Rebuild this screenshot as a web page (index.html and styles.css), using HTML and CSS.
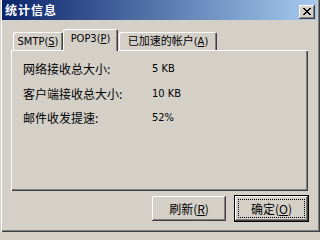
FILE: index.html
```html
<!DOCTYPE html>
<html lang="zh-CN">
<head>
<meta charset="utf-8">
<title>统计信息</title>
<link rel="stylesheet" href="styles.css">
</head>
<body>
<div class="window">
  <div class="titlebar">
    <span class="title">统计信息</span>
    <span class="close">
      <svg width="8" height="7" viewBox="0 0 8 7" shape-rendering="crispEdges">
        <path d="M0 0h2v1h-2zM6 0h2v1h-2zM1 1h2v1h-2zM5 1h2v1h-2zM2 2h4v1h-4zM3 3h2v1h-2zM2 4h4v1h-4zM1 5h2v1h-2zM5 5h2v1h-2zM0 6h2v1h-2zM6 6h2v1h-2z" fill="#000"/>
      </svg>
    </span>
  </div>
  <div class="content">
    <div class="tabs">
      <div class="tab tab-smtp">SMTP(<u>S</u>)</div>
      <div class="tab tab-pop3 active">POP3(<u>P</u>)</div>
      <div class="tab tab-acc">已加速的帐户(<u>A</u>)</div>
    </div>
    <div class="panel">
      <div class="stats">
        <span class="label">网络接收总大小:</span><span class="value">5 KB</span>
        <span class="label">客户端接收总大小:</span><span class="value">10 KB</span>
        <span class="label">邮件收发提速:</span><span class="value">52%</span>
      </div>
    </div>
    <div class="buttons">
      <div class="btn">刷新(<u>R</u>)</div>
      <div class="btn btn-default"><span class="focus">确定(<u>O</u>)</span></div>
    </div>
  </div>
</div>
</body>
</html>
```
FILE: styles.css
```css
html, body {
  margin: 0;
  padding: 0;
  background: #d4d0c8;
}
body {
  font-family: "DejaVu Sans Condensed", "DejaVu Sans", "Noto Sans CJK SC", sans-serif;
  font-stretch: condensed;
  font-size: 11px;
  line-height: 14px;
  color: #000;
}
.window {
  width: 320px;
  height: 232px;
  box-sizing: border-box;
  padding: 0 3px 2px 2px;
  background: #d4d0c8;
  box-shadow: inset 1px 0 #d4d0c8, inset 2px 0 #fff, inset -1px -1px #404040, inset -2px -2px #808080;
  display: flex;
  flex-direction: column;
}
.titlebar {
  height: 20px;
  background: linear-gradient(to right, #0a246a, #a6caf0);
  display: flex;
  align-items: flex-start;
  justify-content: space-between;
}
.title {
  font-family: "Noto Sans CJK SC", sans-serif;
  font-weight: bold;
  font-size: 12px;
  letter-spacing: 1px;
  color: #fff;
  padding-left: 3px;
  line-height: 20px;
}
.close {
  width: 16px;
  height: 14px;
  margin-top: 5px;
  margin-right: 2px;
  box-sizing: border-box;
  background: #d4d0c8;
  box-shadow: inset -1px -1px #404040, inset 1px 1px #fff, inset -2px -2px #808080;
  display: flex;
  align-items: center;
  justify-content: center;
  padding-bottom: 1px;
}
.close svg { display: block; }
.content {
  padding-left: 9px;
  display: flex;
  flex-direction: column;
}
.tabs {
  margin-top: 9px;
  margin-left: 2px;
  height: 21px;
  display: flex;
  align-items: flex-end;
}
.tab {
  height: 18px;
  box-sizing: border-box;
  display: flex;
  align-items: center;
  justify-content: center;
  padding-top: 1px;
  border-radius: 2px 2px 0 0;
  box-shadow: inset 1px 1px #fff, inset -1px 0 #404040, inset -2px 0 #808080;
  font-family: "DejaVu Sans Condensed", "DejaVu Sans", "Noto Sans CJK SC", sans-serif;
}
.tab-smtp { width: 50px; }
.tab-pop3 { width: 55px; }
.tab-acc { width: 98px; margin-left: 1px; }
.tab.active {
  height: 22px;
  margin-bottom: -1px;
  padding-top: 0;
  padding-bottom: 3px;
  position: relative;
  z-index: 1;
  background: #d4d0c8;
}
.panel {
  width: 297px;
  height: 141px;
  box-sizing: border-box;
  padding: 12px 0 0 12px;
  box-shadow: inset 1px 1px #fff, inset -1px -1px #404040, inset -2px -2px #808080;
}
.stats {
  display: grid;
  grid-template-columns: 129px auto;
  row-gap: 10.5px;
}
.label {
  font-family: "Noto Sans CJK SC", sans-serif;
  font-size: 12px;
}
.buttons {
  margin-top: 4px;
  padding-right: 8px;
  height: 27px;
  display: flex;
  justify-content: flex-end;
  align-items: center;
  gap: 8px;
}
.btn {
  width: 74px;
  height: 25px;
  box-sizing: border-box;
  display: flex;
  align-items: center;
  justify-content: center;
  font-family: "Noto Sans CJK SC", sans-serif;
  font-size: 12px;
  box-shadow: inset -1px -1px #404040, inset 1px 1px #fff, inset -2px -2px #808080;
}
.btn-default {
  width: 75px;
  height: 27px;
  border: 1px solid #000;
  padding: 3px;
}
.focus {
  flex: 1;
  align-self: stretch;
  display: flex;
  align-items: center;
  justify-content: center;
  border: 1px dotted #000;
}
u { text-decoration: underline; text-underline-offset: 1px; }
```
